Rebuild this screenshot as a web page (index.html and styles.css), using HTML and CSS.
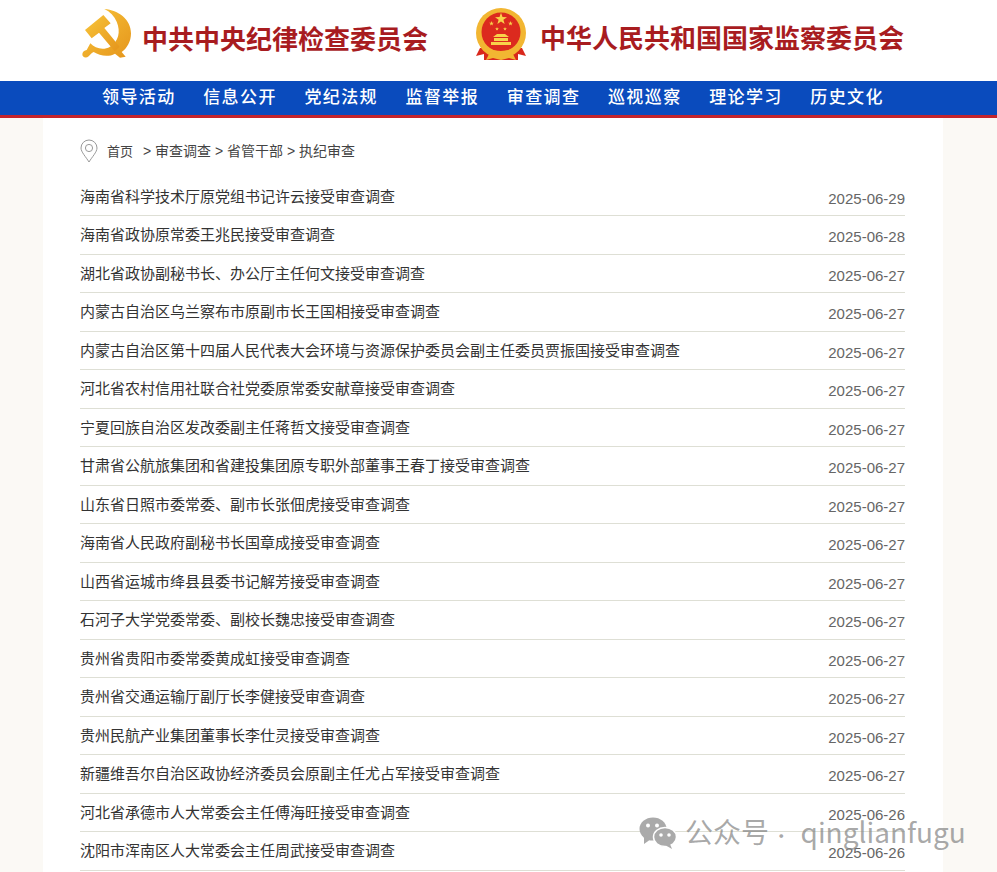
FILE: index.html
```html
<!DOCTYPE html>
<html lang="zh-CN">
<head>
  <meta charset="UTF-8">
  <title>执纪审查</title>
  <link rel="stylesheet" href="styles.css">
</head>
<body>

  <!-- Header -->
  <div class="header">
    <div class="logo logo-left">
      <svg class="party-icon" width="50" height="52" viewBox="18 27 150 156">
        <defs>
          <linearGradient id="gold" x1="0" y1="0" x2="1" y2="1">
            <stop offset="0" stop-color="#f8c53a"/>
            <stop offset="1" stop-color="#e5951c"/>
          </linearGradient>
        </defs>
        <path d="M88 27 C130 30 168 58 168 100 C168 125 156 145 140 156 L152 170 L135 173 L120 161 C100 172 75 168 56 156 C50 159 46 163 41 169 C33 176 21 172 22 162 C23 155 28 152 35 150 L46 130 C60 145 85 152 105 140 C130 125 138 95 125 65 C118 48 105 35 88 27 Z" fill="url(#gold)"/>
        <path d="M30 90 L85 45 L107 70 L88 84 L134 140 L119 154 L72 98 L50 115 Z" fill="url(#gold)"/>
      </svg>
      <span class="logo-text">中共中央纪律检查委员会</span>
    </div>
    <div class="logo logo-right">
      <svg class="emblem-icon" width="52" height="54" viewBox="0 0 52 54">
        <defs>
          <polygon id="star" points="0,-5 1.2,-1.6 4.8,-1.5 1.9,0.6 2.9,4 0,2 -2.9,4 -1.9,0.6 -4.8,-1.5 -1.2,-1.6"/>
        </defs>
        <path d="M5 40 L1 48 L9 46 L9 52 L43 52 L43 46 L51 48 L47 40 Z" fill="#d9281c"/>
        <circle cx="26" cy="25" r="25" fill="#f2b632"/>
        <circle cx="26" cy="24" r="19.5" fill="#dc2a1e"/>
        <use href="#star" transform="translate(26 11) scale(1.25)" fill="#f8d24a"/>
        <use href="#star" transform="translate(16.5 15.5) scale(0.5)" fill="#f8d24a"/>
        <use href="#star" transform="translate(35.5 15.5) scale(0.5)" fill="#f8d24a"/>
        <use href="#star" transform="translate(22 21) scale(0.4)" fill="#f8d24a"/>
        <use href="#star" transform="translate(30 21) scale(0.4)" fill="#f8d24a"/>
        <path d="M22 26 H30 L34 29 H18 Z M19 30 H33 V33 H19 Z M16 34 H36 V37 H16 Z" fill="#f8d24a"/>
        <path d="M6 32 C10 40 18 43 26 43 C34 43 42 40 46 32 L47 38 C42 45 34 47 26 47 C18 47 10 45 5 38 Z" fill="#f2b632"/>
        <path d="M11 52 L14 46 L20 44 L26 47 L32 44 L38 46 L41 52 L34 50 L26 52 L18 50 Z" fill="#f2b632"/>
      </svg>
      <span class="logo-text">中华人民共和国国家监察委员会</span>
    </div>
  </div>

  <!-- Nav -->
  <div class="nav">
    <a href="#">领导活动</a>
    <a href="#">信息公开</a>
    <a href="#">党纪法规</a>
    <a href="#">监督举报</a>
    <a href="#">审查调查</a>
    <a href="#">巡视巡察</a>
    <a href="#">理论学习</a>
    <a href="#">历史文化</a>
  </div>

  <div class="main">
    <!-- Breadcrumb -->
    <div class="crumb">
      <svg class="pin" width="18" height="24" viewBox="0 0 18 24">
        <path d="M9 23 C6 18 1 13 1 9 A8 8 0 0 1 17 9 C17 13 12 18 9 23 Z" fill="none" stroke="#999" stroke-width="1"/>
        <circle cx="9" cy="9" r="3.6" fill="none" stroke="#999" stroke-width="1"/>
      </svg>
      <span class="crumb-home">首页</span>
      <span class="crumb-path">&gt; 审查调查 &gt; 省管干部 &gt; 执纪审查</span>
    </div>

    <!-- List -->
    <ul class="list">
      <li><a href="#">海南省科学技术厅原党组书记许云接受审查调查</a><span class="date">2025-06-29</span></li>
      <li><a href="#">海南省政协原常委王兆民接受审查调查</a><span class="date">2025-06-28</span></li>
      <li><a href="#">湖北省政协副秘书长、办公厅主任何文接受审查调查</a><span class="date">2025-06-27</span></li>
      <li><a href="#">内蒙古自治区乌兰察布市原副市长王国相接受审查调查</a><span class="date">2025-06-27</span></li>
      <li><a href="#">内蒙古自治区第十四届人民代表大会环境与资源保护委员会副主任委员贾振国接受审查调查</a><span class="date">2025-06-27</span></li>
      <li><a href="#">河北省农村信用社联合社党委原常委安献章接受审查调查</a><span class="date">2025-06-27</span></li>
      <li><a href="#">宁夏回族自治区发改委副主任蒋哲文接受审查调查</a><span class="date">2025-06-27</span></li>
      <li><a href="#">甘肃省公航旅集团和省建投集团原专职外部董事王春丁接受审查调查</a><span class="date">2025-06-27</span></li>
      <li><a href="#">山东省日照市委常委、副市长张佃虎接受审查调查</a><span class="date">2025-06-27</span></li>
      <li><a href="#">海南省人民政府副秘书长国章成接受审查调查</a><span class="date">2025-06-27</span></li>
      <li><a href="#">山西省运城市绛县县委书记解芳接受审查调查</a><span class="date">2025-06-27</span></li>
      <li><a href="#">石河子大学党委常委、副校长魏忠接受审查调查</a><span class="date">2025-06-27</span></li>
      <li><a href="#">贵州省贵阳市委常委黄成虹接受审查调查</a><span class="date">2025-06-27</span></li>
      <li><a href="#">贵州省交通运输厅副厅长李健接受审查调查</a><span class="date">2025-06-27</span></li>
      <li><a href="#">贵州民航产业集团董事长李仕灵接受审查调查</a><span class="date">2025-06-27</span></li>
      <li><a href="#">新疆维吾尔自治区政协经济委员会原副主任尤占军接受审查调查</a><span class="date">2025-06-27</span></li>
      <li><a href="#">河北省承德市人大常委会主任傅海旺接受审查调查</a><span class="date">2025-06-26</span></li>
      <li><a href="#">沈阳市浑南区人大常委会主任周武接受审查调查</a><span class="date">2025-06-26</span></li>
    </ul>
  </div>

  <!-- Watermark over the list -->
  <div class="watermark">
    <svg width="38" height="32" viewBox="0 0 38 32">
      <ellipse cx="14" cy="12" rx="13.5" ry="11.5" fill="#aaa"/>
      <path d="M5 19 L5 27 L12 22 Z" fill="#aaa"/>
      <ellipse cx="26" cy="20" rx="11.5" ry="9.5" fill="#aaa" stroke="#fff" stroke-width="1.5"/>
      <path d="M31 27 L33 32 L26 28 Z" fill="#aaa"/>
      <circle cx="9" cy="8.5" r="2" fill="#fff"/>
      <circle cx="18" cy="8.5" r="2" fill="#fff"/>
      <circle cx="22" cy="18" r="1.8" fill="#fff"/>
      <circle cx="30" cy="18" r="1.8" fill="#fff"/>
    </svg>
    <span>公众号 <span class="dot">·</span> qinglianfugu</span>
  </div>

</body>
</html>
```

FILE: styles.css
```css
/* General Reset */
* {
  margin: 0;
  padding: 0;
  box-sizing: border-box;
}
html {
  height: 100%;
}
body {
  background-color: #fbf9f5;
  color: #333;
  font-family: "Liberation Sans", "Noto Sans CJK SC", sans-serif;
  height: 872px;
  overflow: hidden;
  position: relative;
}
a {
  color: inherit;
  text-decoration: none;
}

/* Header */
.header {
  background-color: #fff;
  height: 81px;
  display: flex;
  padding-left: 81px;
}
.logo {
  display: flex;
  align-items: flex-start;
}
.logo-left {
  width: 394px;
  padding-top: 9px;
}
.logo-right {
  padding-top: 8px;
}
.party-icon {
  margin-right: 11px;
}
.emblem-icon {
  margin-right: 13px;
}
.logo-text {
  font-family: "Noto Sans CJK SC", sans-serif;
  font-size: 26px;
  font-weight: 700;
  line-height: 30px;
  color: #a81c1f;
  margin-top: 14px;
  white-space: nowrap;
}

/* Nav */
.nav {
  background-color: #0a4bbd;
  border-bottom: 3px solid #c4242c;
  height: 37px;
  display: flex;
  padding-left: 102px;
  gap: 28.2px;
}
.nav a {
  color: #fff;
  font-family: "Noto Sans CJK SC", sans-serif;
  font-size: 17px;
  font-weight: 500;
  letter-spacing: 1.4px;
  line-height: 30px;
  width: 73px;
  white-space: nowrap;
}

/* Main */
.main {
  background-color: #fff;
  width: 900px;
  margin-left: 43px;
  padding: 20px 38px 0 37px;
  height: 754px;
}
.crumb {
  display: flex;
  align-items: center;
  font-size: 14px;
  color: #444;
  height: 26px;
  margin-bottom: 13.5px;
}
.pin {
  margin-right: 9px;
}
.crumb-home {
  font-size: 13px;
  margin-right: 10px;
  margin-bottom: 2px;
}
.crumb-path {
  margin-bottom: 2px;
}

/* List */
.list {
  list-style: none;
}
.list li {
  height: 38.5px;
  border-bottom: 1px solid #dedfd5;
  display: flex;
  justify-content: space-between;
  font-size: 15px;
  line-height: 38px;
}
.list .date {
  color: #666;
  padding-top: 2px;
}

/* Watermark */
.watermark {
  position: absolute;
  left: 639px;
  top: 815px;
  display: flex;
  align-items: center;
  gap: 8px;
  color: rgba(130, 130, 130, 0.7);
  font-family: "Noto Sans CJK SC", sans-serif;
  font-size: 28px;
  word-spacing: -3px;
  line-height: 32px;
  white-space: nowrap;
}
.dot {
  font-size: 18px;
  margin-right: 7px;
}
```
